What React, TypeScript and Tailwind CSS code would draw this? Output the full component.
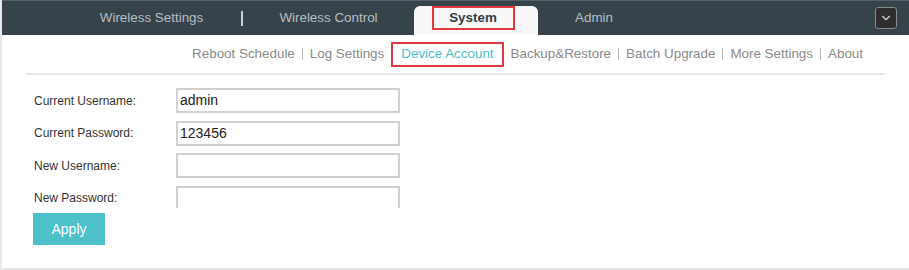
import { ChevronDown } from "lucide-react";

const fields = [
  { label: "Current Username:", value: "admin" },
  { label: "Current Password:", value: "123456" },
  { label: "New Username:", value: "" },
  { label: "New Password:", value: "" },
];

function Sep() {
  return <span className="mx-[7px] w-[1px] h-[12px] bg-[#b8b8b8]" />;
}

export default function App() {
  return (
    <div className="w-[909px] h-[270px] bg-white font-['Liberation_Sans',Arial,sans-serif] border-l-2 border-b-2 border-[#e8e8e8] flex flex-col overflow-hidden">
      {/* top tabs */}
      <div className="h-[35px] bg-[#36434b] border-t border-[#55606a] flex items-end pl-[60px] shrink-0">
        <div className="w-[179px] h-full flex items-center justify-center text-[13.4px] text-[#b7bec2]">
          Wireless Settings
        </div>
        <div className="w-[2px] h-[15px] bg-[#c9cfd2] self-center" />
        <div className="w-[171px] h-full flex items-center justify-center text-[13.4px] text-[#b7bec2]">
          Wireless Control
        </div>
        <div className="w-[124px] h-[29px] bg-[#f8f8f8] rounded-t-[6px] flex items-start justify-center">
          <span className="w-[83px] h-[24px] border-2 border-[#e2393e] flex items-center justify-center text-[13.4px] font-bold text-[#333c44] ml-[-6px]">
            System
          </span>
        </div>
        <div className="w-[112px] h-full flex items-center justify-center text-[13.4px] text-[#b7bec2]">
          Admin
        </div>
        <div className="ml-auto mr-[12px] mb-[6px] w-[22px] h-[22px] rounded-[3px] bg-[#2e2e2e] border border-[#8a8a8a] flex items-center justify-center">
          <ChevronDown size={14} strokeWidth={2} className="text-[#d6d6d6]" />
        </div>
      </div>

      {/* sub nav */}
      <div className="h-[38px] flex items-center justify-end pr-[46px] text-[13.4px] text-[#8a8a8a] shrink-0">
        <span>Reboot Schedule</span>
        <Sep />
        <span>Log Settings</span>
        <span className="mx-[7px] px-[8px] h-[25px] flex items-center text-[#4cbfc9] border-2 border-[#e2393e]">
          Device Account
        </span>
        <span>Backup&amp;Restore</span>
        <Sep />
        <span>Batch Upgrade</span>
        <Sep />
        <span>More Settings</span>
        <Sep />
        <span>About</span>
      </div>
      <div className="mx-[24px] h-[2px] bg-[#e8e8e8] shrink-0" />

      {/* form */}
      <div className="h-[133px] overflow-hidden pt-[13px] pl-[32px] flex flex-col gap-[7.6px] shrink-0">
        {fields.map((f) => (
          <div key={f.label} className="flex items-center shrink-0">
            <label className="w-[142px] text-[12px] text-[#333]">{f.label}</label>
            <div className="w-[224px] h-[25px] border-2 border-[#d2d2d2] flex items-center px-[2px] text-[14px] text-[#222]">
              {f.value}
            </div>
          </div>
        ))}
      </div>
      <div className="pl-[31px] pt-[5px]">
        <button className="w-[72px] h-[32px] bg-[#4cc1c9] text-white text-[14px]">
          Apply
        </button>
      </div>
    </div>
  );
}
